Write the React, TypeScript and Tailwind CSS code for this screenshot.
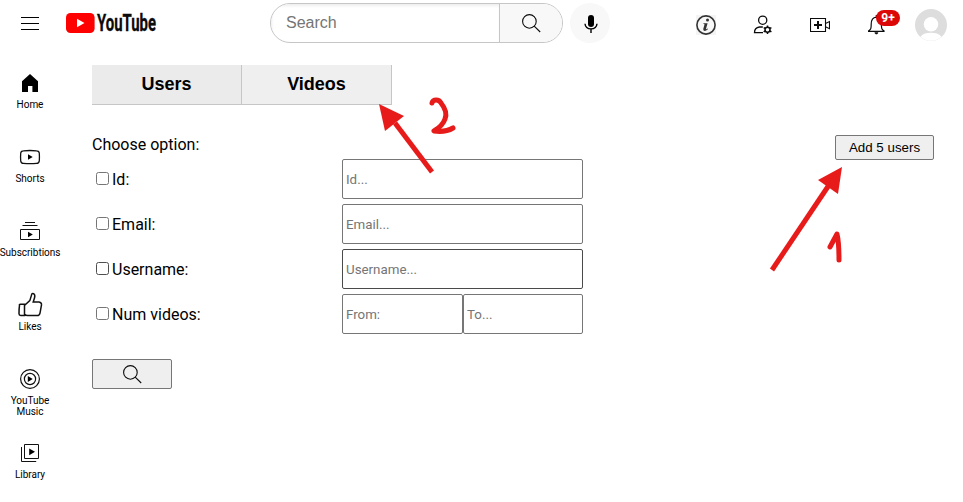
import React from "react";

const line = { fill: "none", stroke: "#0b0b0b" } as const;

function SearchIcon() {
  return (
    <svg width="20" height="20" viewBox="0 0 20 20" {...line} strokeWidth="1.1">
      <circle cx="8.4" cy="8.4" r="6.8" />
      <path d="M13.2 13.2 19.2 19" />
    </svg>
  );
}

function Logo() {
  return (
    <svg className="ml-[26px] overflow-visible" width="96" height="24" viewBox="0 0 96 24">
      <rect x="1" y="2" width="28.6" height="20" rx="4.5" fill="#f00" />
      <path d="M12 7.7v8.6l7.5-4.3z" fill="#fff" />
      <text x="32" y="20" textLength="59" lengthAdjust="spacingAndGlyphs" fontFamily="Roboto, sans-serif" fontWeight="700" fontSize="23.5" fill="#0b0b0b" stroke="#0b0b0b" strokeWidth=".3">YouTube</text>
    </svg>
  );
}

function HeaderIcons() {
  return (
    <div className="ml-auto mt-[9px] flex h-8 items-center">
      <svg width="20" height="20" viewBox="0 0 20 20">
        <rect width="20" height="20" fill="#f4f4f4" />
        <circle cx="10" cy="10" r="9.1" fill="#f8f8f8" stroke="#333" strokeWidth="1.6" />
        <circle cx="11.5" cy="4.9" r="1.5" fill="#333" />
        <path d="M7.3 8.2h4.3l-1.7 6.1q.6.3 1.9-.7l.3.5q-1.5 1.9-3.4 1.8-2-.1-1.4-2.2l1.2-4.2q-.1-.8-1.3-.7z" fill="#333" />
      </svg>
      <svg className="ml-[37px]" width="20" height="20" viewBox="0 0 20 20" {...line} strokeWidth="1.3">
        <circle cx="9.7" cy="5.2" r="4.1" />
        <path d="M10 17.6H1.5c0-3.4 1.8-5.2 5-5.6h3.3" />
        <circle cx="14.5" cy="14.7" r="2.5" strokeWidth="1.5" />
        <path d="M14.5 10.4v1.6m0 5.4V19m-3.8-6.4 1.4.8m4.8 2.6 1.5.9m-7.7 0 1.4-.9m4.8-2.6 1.5-.8" strokeWidth="1.5" />
      </svg>
      <svg className="ml-[37px]" width="20" height="20" viewBox="0 0 20 20" {...line} strokeWidth="1.1">
        <path d="M.5 3.5h15v13H.5zM15.5 8.5l4-2v7.2l-4-2" />
        <path d="M8 6v8M4 10h8" strokeWidth="2" />
      </svg>
      <div className="relative ml-[37px] h-[22px] w-5">
        <svg width="20" height="22" viewBox="0 0 20 22" {...line} strokeWidth="1.2">
          <path d="M1 17.4h16.6M1.2 17.2c2.8-2 3-2.5 3-6.9 0-4.3 1.4-6.9 5.1-7.2 3.7.3 5.1 2.9 5.1 7.2 0 4.4.2 4.9 3 6.9M9.3 3V1" />
          <path d="M7.8 18.6h3.2c-.3 2-2.9 2-3.2 0z" fill="#0b0b0b" strokeWidth=".5" />
        </svg>
        <span className="absolute -top-1 left-[9px] flex h-4 w-6 items-center justify-center rounded-full bg-[#dc0808] font-['Roboto',sans-serif] text-[12px] font-bold text-white">9+</span>
      </div>
      <svg className="ml-[28px]" width="32" height="32" viewBox="0 0 32 32">
        <circle cx="16" cy="16" r="16" fill="#ddd" />
        <circle cx="16" cy="15.3" r="7.2" fill="#fff" />
        <path d="M5.4 27.7C8 24.8 11.5 23.8 16 23.8s8 1 10.6 3.9a15.6 15.6 0 0 1-21.2 0z" fill="#fff" />
      </svg>
    </div>
  );
}

const sidebar = [
  {
    label: "Home",
    icon: <path d="M2 19V8.2L10 1l8 7.2V19h-5.6v-6H8v6z" fill="#000" stroke="none" />,
  },
  {
    label: "Shorts",
    icon: <><path d="M3.4 3.8Q10 3.2 16.6 3.8q2.5.1 2.7 2.5.3 4 0 7.5-.3 2.5-2.7 2.6-6.6.5-13.2 0Q1 16.3.7 13.8q-.3-3.5 0-7.5.2-2.4 2.7-2.5z" strokeWidth="1.3" /><path d="M8 7.2v5.6l4.7-2.8z" fill="#000" stroke="none" /></>,
  },
  {
    label: "Subscribtions",
    icon: <><path d="M5 1.5h10M2.5 4.5h15M.5 8.5h19v10H.5z" /><path d="M8 10.7v5.6l4.8-2.8z" fill="#000" stroke="none" /></>,
  },
  {
    label: "Likes",
    icon: <path d="M-.5 10.5Q-1 9.2.5 9.2h4v11.3H.8Q-1 20.4-1 18.7-1.1 14-.5 10.5zM4.7 10.2l5.1-4.6L11.5.1q.4-2.1 2-1.5 2 1 1 4.5l-1.3 4h5.9q2.6.4 2.4 2.8L20 18.1q-.5 2.5-2.8 2.5H7.5q-1.6 0-2.8-1.2" strokeWidth="1.5" />,
  },
  {
    label: "YouTube Music",
    icon: <><circle cx="10" cy="10" r="9.4" strokeWidth="1.2" /><circle cx="10" cy="10" r="5.6" strokeWidth="1.2" /><path d="M7.8 6.9v6.2L12.7 10z" fill="#000" stroke="none" /></>,
  },
  {
    label: "Library",
    icon: <><path d="M4.5 1.5h14v14h-14zM1.5 4v14.5h14.7" /><path d="M9.2 5.4v6.8l5.8-3.4z" fill="#000" stroke="none" /></>,
  },
];

const field = "h-10 rounded-[2px] border border-[#767676] px-[3px] text-[13.333px] placeholder:text-[#757575] outline-none";

function Option({ label, dark, children }: { label: string; dark?: boolean; children: React.ReactNode }) {
  return (
    <div className="flex h-10 items-center">
      <label className="flex w-[250px] items-center pl-1 pt-px">
        <input type="checkbox" className={`mr-[3px] mb-[3px] h-[13px] w-[13px] appearance-none rounded-[2.5px] border ${dark ? "border-[#4f4f4f]" : "border-[#767676]"}`} />
        {label}
      </label>
      {children}
    </div>
  );
}

function Annotations() {
  return (
    <svg className="pointer-events-none absolute inset-0" width="963" height="502" viewBox="0 0 963 502" fill="none" stroke="#e81b1b" strokeLinejoin="round">
      <path d="M432 172 395 123" strokeWidth="5" />
      <path d="M379 104 404 116 385 131z" fill="#e81b1b" stroke="none" />
      <path d="M432 103c1-4 7-4 9 0 4 5 6 11 4 16-2 6-6 9-11 12 7 1 14 0 19-3" strokeWidth="5" strokeLinecap="round" />
      <path d="M772 270 829 185" strokeWidth="5" />
      <path d="M842 167 818 180 838 194z" fill="#e81b1b" stroke="none" />
      <path d="M830 247 837 234c2 8 2 16 2 26" strokeWidth="5" strokeLinecap="round" />
    </svg>
  );
}

export default function App() {
  return (
    <div className="relative h-[502px] w-[963px] overflow-hidden bg-white font-['Roboto',sans-serif] text-base text-black">
      <header className="flex h-[60px] items-start pl-[21px] pr-4">
        <button className="mt-[17px] flex w-[18px] flex-col gap-[5px]" aria-label="Menu">
          <span className="h-px w-full bg-black" />
          <span className="h-px w-full bg-black" />
          <span className="h-px w-full bg-black" />
        </button>
        <div className="mt-[11px]"><Logo /></div>
        <div className="ml-[109px] mt-[3px] flex h-10 w-[293px] overflow-hidden rounded-full border border-[#c6c6c6]">
          <input placeholder="Search" className="w-[228px] px-[15px] font-['Liberation_Sans',Arial,sans-serif] text-base shadow-[inset_1px_2px_3px_#eee] outline-none placeholder:text-[#757575]" />
          <button className="flex flex-1 items-center justify-center border-l border-[#c6c6c6] bg-[#f8f8f8]" aria-label="Search"><SearchIcon /></button>
        </div>
        <button className="ml-[7px] mt-[3px] flex h-10 w-10 items-center justify-center rounded-full bg-[#f8f8f8]" aria-label="Voice">
          <svg width="16" height="20" viewBox="0 0 16 20">
            <rect x="6" y="2" width="6" height="12" rx="3" />
            <path d="M3 10.8c.3 3.3 2.4 5.1 6 5.1s5.7-1.8 6-5.1M9 16v4" fill="none" stroke="#000" strokeWidth="1.4" />
          </svg>
        </button>
        <HeaderIcons />
      </header>
      <div className="flex">
        <nav className="flex w-[60px] shrink-0 flex-col pt-[13px]">
          {sidebar.map(({ label, icon }) => (
            <a key={label} className="flex h-[74px] flex-col items-center text-center text-[10px] leading-[11px]">
              <svg className="mb-[6px] overflow-visible" width="20" height="20" viewBox="0 0 20 20" fill="none" stroke="#111">{icon}</svg>
              <span className="tracking-[-0.02px]">{label}</span>
            </a>
          ))}
        </nav>
        <main className="ml-8 w-[842px] pt-[5px]">
          <div className="flex h-10 w-[300px] font-['Liberation_Sans',Arial,sans-serif] text-lg font-bold">
            <button className="w-[150px] border-r border-b border-[#c6c6c6] bg-[#ebebeb] pb-px">Users</button>
            <button className="w-[150px] border-r border-b border-[#c6c6c6] bg-[#efefef] pb-px">Videos</button>
          </div>
          <div className="mt-[30px] flex items-start justify-between">
            <form>
              <p className="h-6 pt-px leading-[18px]">Choose option:</p>
              <div className="flex flex-col gap-[5px]">
                <Option label="Id:"><input placeholder="Id..." className={`${field} w-[241px]`} /></Option>
                <Option label="Email:"><input placeholder="Email..." className={`${field} w-[241px]`} /></Option>
                <Option label="Username:" dark><input placeholder="Username..." className={`${field} w-[241px] border-[#4a4a4a]!`} /></Option>
                <Option label="Num videos:">
                  <input placeholder="From:" className={`${field} w-[121px]`} />
                  <input placeholder="To..." className={`${field} w-[120px]`} />
                </Option>
              </div>
              <button type="button" className="mt-[25px] flex h-[30px] w-20 items-center justify-center rounded-[2px] border border-[#767676] bg-[#efefef]" aria-label="Find users"><SearchIcon /></button>
            </form>
            <button className="h-[25px] w-[99px] rounded-[2px] border border-[#767676] bg-[#efefef] font-['Liberation_Sans',Arial,sans-serif] text-[13.333px]">Add 5 users</button>
          </div>
        </main>
      </div>
      <Annotations />
    </div>
  );
}
